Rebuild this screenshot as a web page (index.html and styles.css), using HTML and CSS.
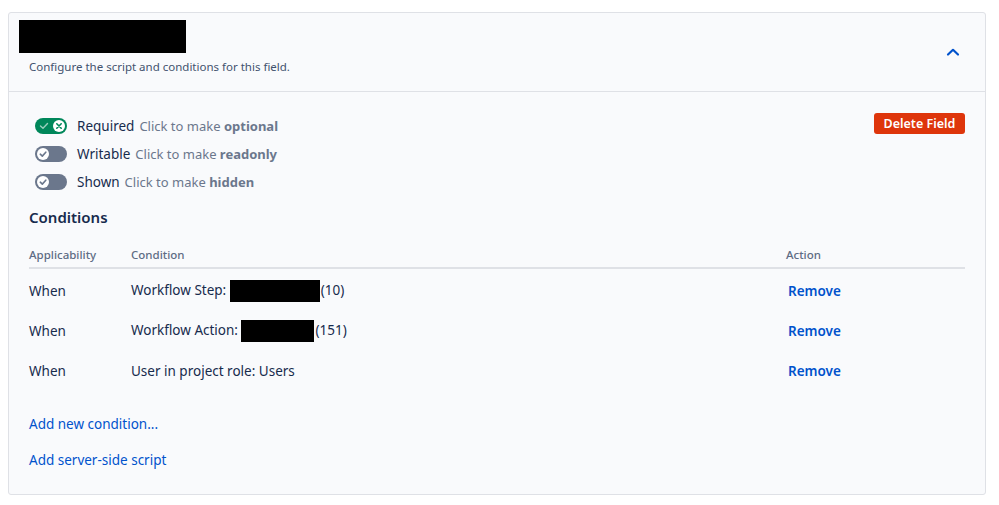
FILE: index.html
```html
<!DOCTYPE html>
<html>
<head>
<meta charset="utf-8">
<link rel="stylesheet" href="styles.css">
</head>
<body>
<div class="card">
  <div class="card-head">
    <div class="head-text">
      <div class="redacted title-box"></div>
      <div class="subtitle">Configure the script and conditions for this field.</div>
    </div>
    <svg class="chevron" width="14" height="10" viewBox="0 0 14 10"><path d="M2 7.5 L7 2.8 L12 7.5" fill="none" stroke="#0052cc" stroke-width="2.2" stroke-linecap="round" stroke-linejoin="round"/></svg>
  </div>
  <div class="card-body">
    <div class="top-row">
      <div class="toggles">
        <div class="toggle-row">
          <span class="toggle on">
            <svg class="tick" width="10" height="8" viewBox="0 0 10 8"><path d="M1.5 4 L4 6.3 L8.5 1.5" fill="none" stroke="#ffffff" stroke-width="1.4" stroke-linecap="round" stroke-linejoin="round" opacity="0.6"/></svg>
            <span class="knob"><svg width="12" height="12" viewBox="0 0 12 12"><path d="M3.8 3.8 L8.2 8.2 M8.2 3.8 L3.8 8.2" stroke="#00875a" stroke-width="1.6" stroke-linecap="round"/></svg></span>
          </span>
          <span class="label">Required</span>
          <span class="hint">Click to make <b>optional</b></span>
        </div>
        <div class="toggle-row">
          <span class="toggle off">
            <span class="knob"><svg width="12" height="12" viewBox="0 0 12 12"><path d="M3.3 6.2 L5.3 8.1 L8.8 4.2" fill="none" stroke="#6b778c" stroke-width="1.6" stroke-linecap="round" stroke-linejoin="round"/></svg></span>
          </span>
          <span class="label">Writable</span>
          <span class="hint">Click to make <b>readonly</b></span>
        </div>
        <div class="toggle-row">
          <span class="toggle off">
            <span class="knob"><svg width="12" height="12" viewBox="0 0 12 12"><path d="M3.3 6.2 L5.3 8.1 L8.8 4.2" fill="none" stroke="#6b778c" stroke-width="1.6" stroke-linecap="round" stroke-linejoin="round"/></svg></span>
          </span>
          <span class="label">Shown</span>
          <span class="hint">Click to make <b>hidden</b></span>
        </div>
      </div>
      <button class="delete-btn">Delete Field</button>
    </div>

    <h2 class="section-title">Conditions</h2>
    <table class="cond-table">
      <thead>
        <tr><th class="c1">Applicability</th><th class="c2">Condition</th><th class="c3">Action</th></tr>
      </thead>
      <tbody>
        <tr><td>When</td><td>Workflow Step: <span class="redacted r1"></span>(10)</td><td><a class="remove">Remove</a></td></tr>
        <tr><td>When</td><td>Workflow Action: <span class="redacted r2"></span>(151)</td><td><a class="remove">Remove</a></td></tr>
        <tr><td>When</td><td>User in project role: Users</td><td><a class="remove">Remove</a></td></tr>
      </tbody>
    </table>

    <div class="links">
      <a class="link">Add new condition...</a>
      <a class="link">Add server-side script</a>
    </div>
  </div>
</div>
</body>
</html>
```
FILE: styles.css
```css
* { box-sizing: border-box; }
html, body { margin: 0; background: #ffffff; }
body {
  padding: 12px 13px 10px 8px;
  font-family: "Noto Sans", "Open Sans", sans-serif;
  color: #172b4d;
}
.card {
  border: 1px solid #dfe1e6;
  border-radius: 3px;
  background: #f9fafc;
  height: 483px;
}
.card-head {
  display: flex;
  justify-content: space-between;
  align-items: flex-start;
  border-bottom: 1px solid #dfe1e6;
  height: 79px;
  padding: 7px 25px 0 10px;
}
.redacted { background: #000; display: inline-block; }
.title-box { width: 167px; height: 33px; display: block; }
.subtitle {
  font-size: 11.5px;
  color: #42526e;
  margin: 6px 0 0 10px;
  line-height: 16px;
}
.chevron { margin-top: 27px; }
.card-body { padding: 19px 20px 0 20px; }
.top-row { display: flex; justify-content: space-between; align-items: flex-start; }
.toggles { display: flex; flex-direction: column; gap: 8px; padding-top: 5px; }
.toggle-row { display: flex; align-items: center; height: 20px; font-size: 14px; }
.toggle {
  width: 32px; height: 16px; border-radius: 8px;
  position: relative; margin: 0 10px 0 6px; flex: none;
}
.toggle.on { background: #00875a; }
.toggle.off { background: #6b778c; }
.knob {
  position: absolute; top: 2px; width: 12px; height: 12px;
  border-radius: 50%; background: #fff; display: flex;
}
.toggle.on .knob { right: 2px; }
.toggle.off .knob { left: 2px; }
.tick { position: absolute; left: 4px; top: 4px; }
.label { color: #172b4d; margin-right: 5px; font-size: 13.5px; }
.hint { color: #6b778c; font-size: 13px; }
.hint b { font-weight: 700; color: #6b778c; }
.delete-btn {
  background: #de350b; color: #fff; border: none; border-radius: 3px;
  font-family: inherit; font-size: 12.5px; font-weight: 600;
  width: 91px; height: 21px; padding: 0; margin: 2px 0 0 0;
}
.section-title {
  font-size: 15px; font-weight: 600; margin: 14px 0 0 0; line-height: 22px;
  color: #172b4d;
}
.cond-table {
  width: 100%; border-collapse: collapse; margin-top: 20px; font-size: 13.5px;
}
.cond-table th {
  text-align: left; font-size: 11.5px; font-weight: 500; color: #5e6c84;
  border-bottom: 2px solid #dfe1e6; padding: 0 0 5px 0; height: 19px; line-height: 14px;
}
.c1 { width: 102px; }
.c2 { width: 655px; }
.cond-table td { height: 40px; padding: 3px 0 0 0; vertical-align: middle; color: #172b4d; }
.cond-table tbody tr:first-child td { height: 41px; }
.r1 { width: 90px; height: 22px; vertical-align: middle; margin-right: 1px; }
.r2 { width: 73px; height: 22px; vertical-align: middle; margin-right: 1px; }
.remove { color: #0052cc; font-weight: 600; padding-left: 2px; }
.links { display: flex; flex-direction: column; gap: 16px; margin-top: 25px; }
.link { color: #0052cc; font-size: 13.5px; line-height: 20px; }
```
